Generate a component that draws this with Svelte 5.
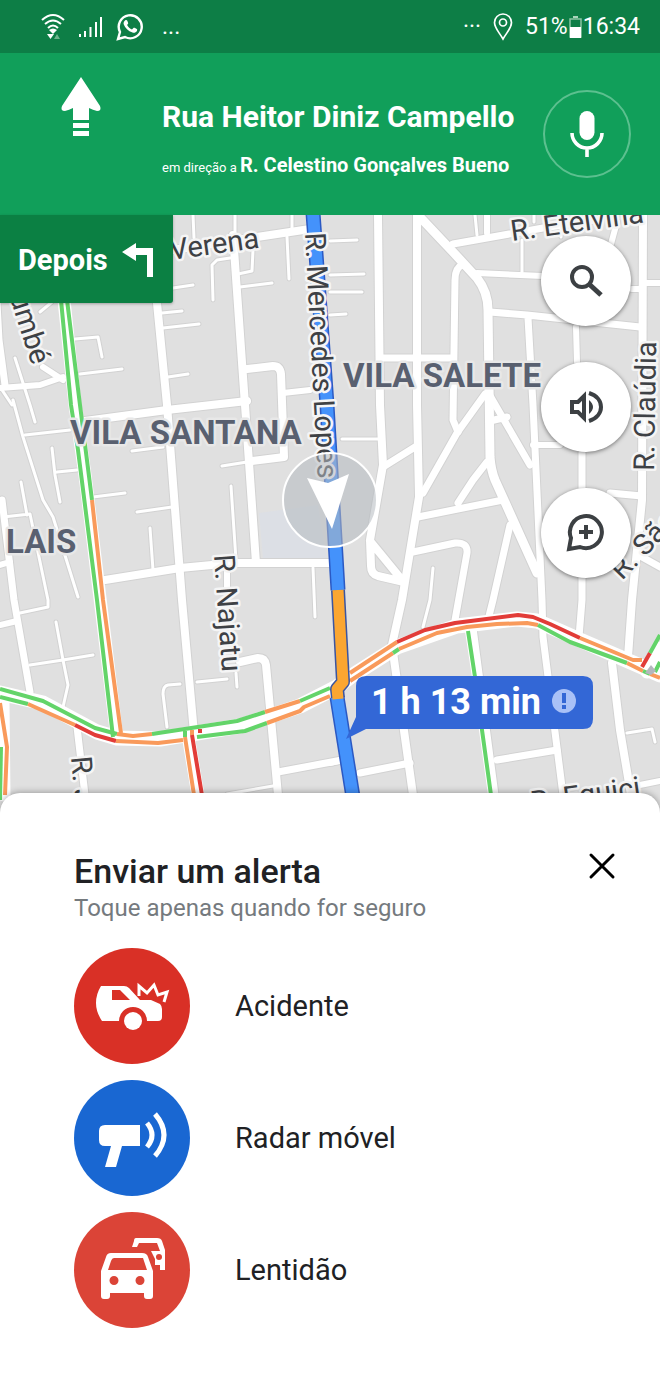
<script lang="ts">
  type Road = [width: number, d: string];
  type Traffic = [level: "green" | "orange" | "red", d: string];
  type Label = { text: string; x: number; y: number; angle: number; end?: boolean };

  const roads: Road[] = [
    [3, "M13 400L23 437L43 500L53 517L78 597M15 358L30 405L35 422M2 390L12 405"],
    [3, "M25 435L70 430M52 448L55 475L60 502M57 472L77 470M21 482L27 515M3 517L30 514L48 600V607L20 613"],
    [3, "M132 451L163 447M93 497L125 493M137 512L172 507M150 528L153 570M222 466L247 462M231 486L236 560"],
    [3, "M313 568L315 617M193 215L194 238M235 215V235M292 215V229M287 237L289 279M213 300L212 265L217 260L230 258"],
    [3, "M253 250L252 271L238 274M240 287L272 283M173 288L193 285M162 313L182 311M163 328L199 324M168 377L188 374"],
    [3, "M75 339L98 337L102 357M80 374L122 369M40 312L52 302"],
    [3, "M330 241L357 240M330 275L364 274M330 292L362 292M330 315L346 314M342 439H378M475 215L477 235M522 240V272M561 225V237M534 215V222"],
    [3, "M56 622L63 660L68 685L63 707M30 665L63 660L93 655M197 682L227 679M167 727L163 694Q163 686 168 685L180 684M236 673L237 687"],
    [3, "M433 568L430 600L423 627M627 733L652 729L655 742M227 794L273 786"],
    [6, "M0 388L40 385L63 377M43 367L63 380M0 565L10 562M0 625L17 621M227 567V587"],
    [6, "M487 215V233M477 273L543 276M576 327L577 362M533 445H560M645 283H660M632 289H643M617 222L611 244"],
    [6, "M630 787L660 781M283 393L310 390M330 763L342 760"],
    [7, "M-3 303L-1 340L5 385M2 500L14 600L30 692M77 727L85 795M278 772L342 760M360 773L410 763M497 760L557 750"],
    [8, "M151 215L157 303L167 405L182 600L194 733M233 235L245 405L256 563M173 250L257 237L310 229"],
    [8, "M247 369L273 366Q280 366 281 374L284 457L252 461M85 421L167 410L247 401M105 580L180 568L233 563H330"],
    [8, "M240 662L258 658Q265 658 266 665L278 795"],
    [8, "M378 215L380 405L383 465L370 540L371 566Q371 574 378 576L404 582M370 541L402 580"],
    [8, "M417 215V405L419 497L402 600L392 645L413 795"],
    [9, "M418 215L453 252L477 278Q488 292 488 310L490 457Q491 470 495 480L537 573"],
    [7, "M462 265Q455 268 455 280L453 420L458 432M380 358H453M453 244L543 228L600 219"],
    [7, "M490 312L527 315L640 327M528 318L533 405L542 600L543 637L563 795M582 453V600L579 637"],
    [8, "M643 215L642 500L632 600L628 657M612 663L620 730L631 795"],
    [7, "M485 394L457 433L423 493M489 394L530 465M490 421L507 417M383 467L415 447M487 462L473 480L458 503M418 517L503 500"],
    [7, "M413 552L455 543Q468 542 467 553L455 620M510 525L493 600L488 620M610 493L642 496M642 557L660 567M473 628L495 795"]
  ];

  const mainStreet =
    "M0 693L43 703L97 732L117 738L160 739L240 726L300 706L337 687L350 677L397 647L457 626L517 619L537 621L580 640L640 666L660 675";

  const traffic: Traffic[] = [
    ["green", "M0 689L43 701L95 728L117 734"],
    ["orange", "M117 734L133 736L152 734"],
    ["green", "M152 734L237 721L265 712"],
    ["orange", "M265 712L300 701"],
    ["green", "M300 701L330 688"],
    ["orange", "M350 673L397 642"],
    ["red", "M397 642L425 630L455 623L518 615L533 617L550 624L580 638"],
    ["orange", "M580 638L633 660L642 660"],
    ["green", "M0 697L28 704"],
    ["orange", "M28 704L75 725"],
    ["red", "M75 725L95 735L116 741"],
    ["orange", "M116 741L158 743L183 740"],
    ["green", "M197 737L245 731L267 723"],
    ["orange", "M267 723L300 711L304 707L330 696"],
    ["orange", "M350 681L393 653"],
    ["green", "M393 653L399 649"],
    ["orange", "M399 649L437 633L467 627L497 624L527 623L538 625"],
    ["green", "M538 625L570 642L627 663"],
    ["orange", "M627 663L643 671"],
    ["green", "M643 671L650 674"],
    ["orange", "M650 674L660 678"],
    ["red", "M642 667L650 653"],
    ["green", "M650 653L660 635M655 672L660 662"],
    ["green", "M61 300L71 405L78 450L97 600L113 737M67 300L80 405L92 500"],
    ["orange", "M92 500L103 600L121 733"],
    ["orange", "M0 703L7 747L5 795"],
    ["green", "M1 747L0 800"],
    ["green", "M185 731V737"],
    ["orange", "M185 737L194 795M192 730V735"],
    ["red", "M192 735L202 795M198 731H202"],
    ["green", "M468 631L475 677L482 730L491 795"]
  ];

  const streets: Label[] = [
    { text: "Verena", x: 171, y: 260, angle: -8 },
    { text: "R. Etelvina", x: 512, y: 241, angle: -8 },
    { text: "R. Mercedes Lopes", x: 305, y: 233, angle: 87 },
    { text: "Itaumbé", x: 32, y: 366, angle: 72, end: true },
    { text: "R. Najatu", x: 214, y: 555, angle: 86 },
    { text: "R. Claúdia", x: 654, y: 471, angle: -89 },
    { text: "R. São", x: 622, y: 581, angle: -46 },
    { text: "R. J", x: 71, y: 757, angle: 85 },
    { text: "R. Equici", x: 532, y: 812, angle: -8 }
  ];

  const districts = [
    { text: "VILA SALETE", x: 343, y: 387 },
    { text: "VILA SANTANA", x: 70, y: 444 },
    { text: "LAIS", x: 6, y: 553 }
  ];

  const alerts = [
    { id: "crash", name: "Acidente" },
    { id: "radar", name: "Radar móvel" },
    { id: "jam", name: "Lentidão" }
  ];

  let sheetOpen = $state(true);
  let selected = $state("");
</script>

<div class="screen">
  <div class="status">
    <div class="status-group">
      <svg width="26" height="28" viewBox="0 0 26 28" fill="none" stroke="#fff" stroke-width="2">
        <path d="M2 7Q13 -3 24 7M5 11Q13 4 21 11M8 15Q13 10 18 15" />
        <path d="M9 17Q13 14 17 17L13 21Z" fill="#fff" stroke="none" />
        <path d="M7 21H14L10.500 26Z" fill="#fff" stroke="none" />
        <path d="M14 26H20L17 21Z" fill="#6db58c" stroke="none" />
      </svg>
      <svg width="26" height="24" viewBox="0 0 26 24" fill="#fff">
        <path d="M1 19h2v3H1zM6 16h2v6H6zM11.500 12h2v10h-2zM17 7h2v15h-2zM22 2h2v20h-2z" />
      </svg>
      <svg width="28" height="28" viewBox="0 0 28 28">
        <path d="M2 26L4 19A11.500 11.500 0 1 1 9 24Z" fill="none" stroke="#fff" stroke-width="2.400" />
        <path
          d="M9 7.500C10 6.600 11 7 11.300 7.800L12.200 10C12.400 10.800 11.500 11.400 11.100 12C12.300 14.200 13.800 15.500 16 16.400L17.400 14.900C17.800 14.500 18.200 14.600 18.600 14.800L20.800 15.900C21.400 16.300 21.200 17.100 20.900 17.900C20.100 19.400 18.200 20 16.500 19.500C12.200 18.200 9.100 15.200 7.800 11.600C7.200 9.800 8 8.300 9 7.500Z"
          fill="#fff"
        />
      </svg>
      <span class="dots">...</span>
    </div>
    <div class="status-group">
      <span>···</span>
      <svg width="20" height="28" viewBox="0 0 20 28" fill="none" stroke="#fff" stroke-width="1.700">
        <path d="M10 26C6 19 1.500 15 1.500 9.500A8.500 8.500 0 0 1 18.500 9.500C18.500 15 14 19 10 26Z" />
        <circle cx="10" cy="9.500" r="3.500" />
      </svg>
      <span class="clock">
        51%
        <svg width="13" height="24" viewBox="0 0 13 24">
          <path d="M4 1h5v2H4z" fill="#a8d5bb" />
          <path d="M1 4h11v18H1z" fill="none" stroke="#8cc5a4" stroke-width="1.500" />
          <path d="M1 12h11v11H1z" fill="#fff" />
        </svg>
        16:34
      </span>
    </div>
  </div>

  <header>
    <svg class="straight" width="42" height="60" viewBox="0 0 42 60" fill="#fff">
      <path d="M21 0L40 29Q42 34 37 34Q33 33 29 31V43H13V31Q9 33 5 34Q0 34 2 29ZM13 46h16v5H13zM13 54h16v5H13z" />
    </svg>
    <div class="direction">
      <h1>Rua Heitor Diniz Campello</h1>
      <p>em direção a <strong>R. Celestino Gonçalves Bueno</strong></p>
    </div>
    <button type="button" class="mic" aria-label="Pesquisa por voz">
      <svg width="34" height="48" viewBox="0 0 34 48" fill="none" stroke="#fff">
        <rect x="9.500" y="1" width="15" height="29" rx="7.500" fill="#fff" stroke="none" />
        <path d="M2 23A15 15 0 0 0 32 23M17 38V47" stroke-width="3.600" />
      </svg>
    </button>
  </header>

  <main class="map">
    <svg class="canvas" viewBox="0 215 660 598" preserveAspectRatio="xMidYMin slice">
      <rect y="215" width="660" height="598" fill="#e0e0e0" />
      <path d="M259 513L318 505L327 559H263Z" fill="#dcdfe5" />

      <g class="lines" stroke="#d2d2d2">
        {#each roads as [width, d]}
          <path {d} stroke-width={width + 2} />
        {/each}
      </g>
      <g class="lines" stroke="#fff">
        {#each roads as [width, d]}
          <path {d} stroke-width={width} />
        {/each}
        <path d={mainStreet} stroke-width="15" />
        <path d="M64 300L75 405L85 475L117 738" stroke-width="13" />
        <path d="M3 703L4 795M188 735L198 795M647 672L660 648" stroke-width="13" />
        <path d="M468 631L475 677L482 730L491 795" stroke-width="6" />
      </g>
      <g class="traffic">
        {#each traffic as [level, d]}
          <path {d} class={level} />
        {/each}
      </g>
      <path d="M645 673L651 665L656 671L651 675Z" fill="#b4b7bd" />

      <g class="route">
        <path d="M313 213L327 405L338 590" stroke="#2b59c3" stroke-width="15" />
        <path d="M337 697L353 797" stroke="#2b59c3" stroke-width="15" />
        <path d="M338 590L343 682L337 689L338 698" stroke="#3b55a0" stroke-width="14" />
        <path d="M313 213L327 405L338 590M337 697L353 797" stroke="#4492fb" stroke-width="12" />
        <path d="M338 590L343 682L337 689L338 699" stroke="#fba631" stroke-width="11" />
      </g>

      <g class="streets">
        {#each streets as { text, x, y, angle, end }}
          <text class:end transform="translate({x} {y}) rotate({angle})">{text}</text>
        {/each}
      </g>
      <g class="districts">
        {#each districts as { text, x, y }}
          <text {x} {y}>{text}</text>
        {/each}
      </g>

      <circle cx="330" cy="500" r="47" fill="#b4bac0" fill-opacity="0.550" stroke="#fff" stroke-width="2" />
      <path d="M307 478L328 483L349 474L332 529Z" fill="#fff" />

      <g class="eta">
        <path
          d="M366 676H583Q593 676 593 686V719Q593 729 583 729H366L346 739L356 717V686Q356 676 366 676Z"
          fill="#3367d6"
        />
        <text x="371" y="714">1 h 13 min</text>
        <circle cx="564" cy="701" r="12" fill="#a9c1f7" />
        <path d="M562 693h4v10h-4zM562 705h4v4h-4z" fill="#3367d6" />
      </g>
    </svg>

    <div class="next">
      <span>Depois</span>
      <svg width="32" height="36" viewBox="0 0 32 36" fill="#fff">
        <path d="M0 10L14 1V6H31V35H25V13H14V19Z" />
      </svg>
    </div>

    <div class="tools">
      <button type="button" aria-label="Pesquisar">
        <svg width="36" height="36" viewBox="0 0 36 36" fill="none" stroke="#3c4043">
          <circle cx="14" cy="14" r="10" stroke-width="4" />
          <path d="M21 21L33 32" stroke-width="5" />
        </svg>
      </button>
      <button type="button" aria-label="Som">
        <svg width="36" height="36" viewBox="0 0 36 36" fill="none" stroke="#3c4043" stroke-width="4">
          <path d="M4 13H10L16 7V29L10 23H4Z" />
          <path d="M21 11Q29 18 21 25Z" fill="#3c4043" stroke="none" />
          <path d="M21 4C37 9 37 27 21 32" />
        </svg>
      </button>
      <button type="button" aria-label="Adicionar alerta" onclick={() => (sheetOpen = true)}>
        <svg width="40" height="40" viewBox="0 0 40 40" fill="none" stroke="#3c4043" stroke-width="4">
          <path d="M3 36L5 25A16 16 0 1 1 14 34Z" />
          <path d="M20 12V26M13 19H27" />
        </svg>
      </button>
    </div>
  </main>

  {#if sheetOpen}
    <section class="sheet" aria-labelledby="sheet-title">
      <div class="sheet-head">
        <div>
          <h2 id="sheet-title">Enviar um alerta</h2>
          <p>Toque apenas quando for seguro</p>
        </div>
        <button type="button" class="close" aria-label="Fechar" onclick={() => (sheetOpen = false)}>
          <svg width="28" height="28" viewBox="0 0 28 28" fill="none" stroke="#000" stroke-width="3">
            <path d="M3 3L25 25M25 3L3 25" stroke-linecap="round" />
          </svg>
        </button>
      </div>

      <ul>
        {#each alerts as alert}
          <li>
            <button type="button" aria-pressed={selected === alert.id} onclick={() => (selected = alert.id)}>
              <span class="badge {alert.id}">
                <svg viewBox="0 0 116 116" fill="#fff">
                  {#if alert.id === "crash"}
                    <path
                      fill-rule="evenodd"
                      d="M27 38H50Q53 38 55 40L66 52H77L86 56Q88 58 88 61V69Q88 73 84 73H73A14 14 0 0 0 45 73H28Q22 64 22 55Q22 46 27 38ZM38 42V52H56L46 42Z"
                    />
                    <circle cx="59" cy="73" r="9" />
                    <path
                      d="M65 48V38L73 45L80 37L84 47L93 44L90 54"
                      fill="none"
                      stroke="#fff"
                      stroke-width="3"
                    />
                  {:else if alert.id === "radar"}
                    <path d="M31 45H66V66H48L42 87H31L37 66H31Q25 66 25 60V51Q25 45 31 45Z" />
                    <path
                      d="M73 43Q83 55 73 67M81 34Q99 55 81 76"
                      fill="none"
                      stroke="#fff"
                      stroke-width="5"
                    />
                  {:else}
                    <path
                      fill-rule="evenodd"
                      d="M37 41H68Q73 41 74 45L79 59V84Q79 87 76 87H73Q70 87 70 84V81H36V84Q36 87 33 87H30Q27 87 27 84V59L32 45Q33 41 37 41ZM40 46Q38 46 37 49L34 58H73L69 46ZM40 64A4 4 0 1 0 40 73A4 4 0 1 0 40 64ZM66 64A4 4 0 1 0 66 73A4 4 0 1 0 66 64Z"
                    />
                    <path
                      fill-rule="evenodd"
                      d="M62 26H83Q87 26 88 29L91 38V58H86V53H81V47L77 39H86L83 31H65L63 35H58L60 29Q60 26 62 26ZM85 42A3 3 0 1 0 85 48A3 3 0 1 0 85 42Z"
                    />
                  {/if}
                </svg>
              </span>
              <span>{alert.name}</span>
            </button>
          </li>
        {/each}
      </ul>
    </section>
  {/if}
</div>

<style>
  :global(body) {
    background: #fff;
  }

  .screen {
    display: flex;
    flex-direction: column;
    min-height: 100vh;
    font-family: Roboto, "Liberation Sans", sans-serif;
    color: #202124;
  }

  button {
    padding: 0;
    border: 0;
    background: none;
    color: inherit;
    font: inherit;
    cursor: pointer;
  }

  h1,
  h2,
  p,
  ul {
    margin: 0;
    padding: 0;
  }

  svg {
    display: block;
    flex: none;
  }

  .status {
    display: flex;
    justify-content: space-between;
    align-items: center;
    box-sizing: border-box;
    height: 53px;
    padding: 0 20px 0 40px;
    background: #0d7e46;
    color: #fff;
    font-size: 23px;
  }

  .status-group {
    display: flex;
    align-items: center;
    gap: 12px;
  }

  .status-group .dots {
    padding-left: 6px;
  }

  .clock {
    display: flex;
    align-items: center;
    gap: 1px;
  }

  header {
    display: flex;
    align-items: center;
    box-sizing: border-box;
    height: 162px;
    padding: 0 29px 0 60px;
    background: #119f5a;
    color: #fff;
  }

  .straight {
    align-self: flex-start;
    margin-top: 24px;
  }

  .direction {
    flex: 1;
    margin-left: 60px;
    padding-top: 12px;
    white-space: nowrap;
  }

  h1 {
    font-size: 30px;
    font-weight: 700;
    line-height: 52px;
  }

  .direction p {
    font-size: 13px;
    line-height: 44px;
  }

  .direction strong {
    font-size: 20px;
  }

  .mic {
    display: grid;
    place-items: center;
    flex: none;
    box-sizing: border-box;
    width: 88px;
    height: 88px;
    border: 2px solid #5cc08f;
    border-radius: 50%;
  }

  .map {
    position: relative;
    height: 598px;
    background: #e0e0e0;
  }

  .canvas {
    width: 100%;
    height: 100%;
  }

  .lines,
  .traffic,
  .route {
    fill: none;
    stroke-linejoin: round;
  }

  .lines {
    stroke-linecap: round;
  }

  .traffic {
    stroke-width: 4px;
  }

  .green {
    stroke: #63d469;
  }

  .orange {
    stroke: #f99a5b;
  }

  .red {
    stroke: #e23c38;
  }

  .streets text,
  .districts text {
    paint-order: stroke;
    stroke: #f5f5f5;
    stroke-width: 5px;
    stroke-linejoin: round;
  }

  .streets text {
    fill: #3e4145;
    font-size: 29px;
  }

  .streets .end {
    text-anchor: end;
  }

  .districts text {
    fill: #596070;
    stroke: #e8e8e8;
    font-size: 33px;
    font-weight: 700;
  }

  .eta text {
    fill: #fff;
    font-size: 36px;
    font-weight: 700;
  }

  .next {
    position: absolute;
    top: 0;
    left: 0;
    display: flex;
    align-items: center;
    gap: 14px;
    box-sizing: border-box;
    height: 88px;
    padding: 2px 19px 0 18px;
    border-radius: 0 0 3px 0;
    background: #0b8043;
    color: #fff;
    font-size: 29px;
    font-weight: 700;
    box-shadow: 0 1px 3px rgba(0, 0, 0, 0.3);
  }

  .tools {
    position: absolute;
    top: 21px;
    right: 29px;
    display: flex;
    flex-direction: column;
    gap: 36px;
  }

  .tools button {
    display: grid;
    place-items: center;
    width: 90px;
    height: 90px;
    border-radius: 50%;
    background: #fff;
    box-shadow: 0 1px 4px rgba(0, 0, 0, 0.5);
  }

  .sheet {
    position: relative;
    flex: 1;
    margin-top: -20px;
    padding: 56px 44px 44px 74px;
    border-radius: 20px 20px 0 0;
    background: #fff;
    box-shadow: 0 -1px 6px rgba(0, 0, 0, 0.3);
  }

  .sheet-head {
    display: flex;
    justify-content: space-between;
    align-items: flex-start;
    margin-bottom: 25px;
  }

  h2 {
    font-size: 34px;
    font-weight: 500;
    line-height: 44px;
  }

  .sheet-head p {
    color: #757a7e;
    font-size: 24px;
    line-height: 30px;
  }

  .close {
    margin-top: 3px;
  }

  ul {
    display: flex;
    flex-direction: column;
    gap: 16px;
    list-style: none;
  }

  li button {
    display: flex;
    align-items: center;
    gap: 45px;
    width: 100%;
    font-size: 29px;
    text-align: left;
  }

  .badge {
    width: 116px;
    height: 116px;
    border-radius: 50%;
  }

  .crash {
    background: #d93026;
  }

  .radar {
    background: #1967d2;
  }

  .jam {
    background: #db4437;
  }
</style>
